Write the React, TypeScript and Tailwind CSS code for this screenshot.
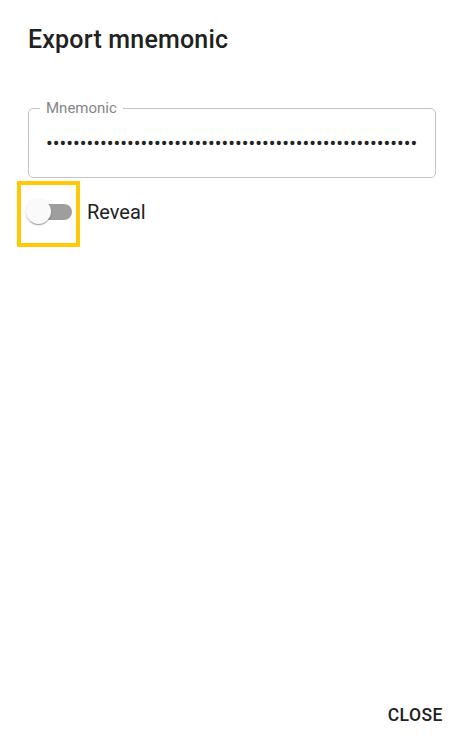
import { useState } from "react"

const font = { fontFamily: "Roboto, 'Liberation Sans', sans-serif" }

const App = () => {
  const [reveal, setReveal] = useState(false)
  const mnemonic = "abandon ability able about above absent absorb abstract absurd a"

  return (
    <div style={font} className="w-[466px] h-[748px] bg-white flex flex-col text-[#212121]">
      <h2 className="pt-[20px] px-[28px] text-[25px] font-medium leading-[40px] tracking-[0.2px]">
        Export mnemonic
      </h2>

      <div className="flex flex-col pl-[28px] pr-[30px] mt-[48px]">
        <div className="relative h-[70px] rounded-[5px] border border-[#c4c4c4] flex items-center">
          <span className="absolute left-[11px] -top-[10px] px-[6px] bg-white text-[15px] leading-[18px] text-[#858585]">
            Mnemonic
          </span>
          <input
            readOnly
            type={reveal ? "text" : "password"}
            value={mnemonic}
            style={font}
            className="w-full px-[17px] text-[20px] text-[#212121] bg-transparent outline-none"
          />
        </div>
      </div>

      <div className="flex items-center ml-[17px] mt-[3px]">
        <button
          onClick={() => setReveal(!reveal)}
          className="relative w-[63px] h-[66px] border-4 border-[#FFC907]"
        >
          <span className="absolute left-[9px] top-[19px] w-[42px] h-[16px] rounded-full bg-[#9e9e9e]" />
          <span className="absolute left-[5px] top-[14px] w-[25px] h-[25px] rounded-full bg-[#fafafa] shadow-[0_2px_1px_-1px_rgba(0,0,0,0.2),0_1px_1px_0_rgba(0,0,0,0.14),0_1px_3px_0_rgba(0,0,0,0.12)]" />
        </button>
        <span className="ml-[7px] pb-[4px] text-[20px] leading-[30px]">Reveal</span>
      </div>

      <div className="flex-1" />

      <div className="flex justify-end pr-[23px] pb-[18px]">
        <button className="text-[17.5px] font-medium leading-[30px] tracking-[0.5px] uppercase text-[#212121]">
          Close
        </button>
      </div>
    </div>
  )
}

export default App
